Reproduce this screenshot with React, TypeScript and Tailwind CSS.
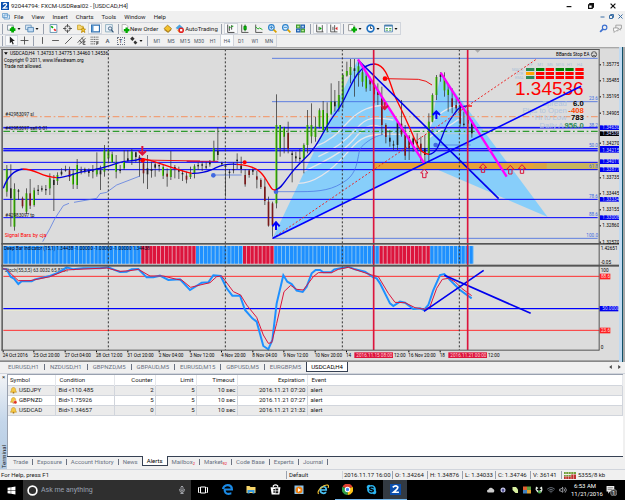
import type { ReactNode } from 'react';
import { FaWindows, FaSkype } from 'react-icons/fa';
import { FiMic, FiVolume2, FiWifi } from 'react-icons/fi';

// --- Types ---
type Candle = [high: number, low: number, top: number, bottom: number, kind: 'g' | 'r' | 'k'];

interface AlertRow {
  symbol: string;
  condition: string;
  counter: number;
  limit: number;
  timeout: string;
  expiration: string;
  event: string;
  stopped?: boolean;
}

const menus = ['File', 'View', 'Insert', 'Charts', 'Tools', 'Window', 'Help'];
const timeframes = ['M1', 'M5', 'M15', 'M30', 'H1', 'H4', 'D1', 'W1', 'MN'];
const chartTabs = ['EURUSD,H1', 'NZDUSD,H1', 'GBPNZD,M5', 'GBPAUD,M5', 'EURUSD,M15', 'GBPUSD,M5', 'EURGBP,M5', 'USDCAD,H4'];

const terminalTabs: { name: string; count?: number }[] = [
  { name: 'Trade' },
  { name: 'Exposure' },
  { name: 'Account History' },
  { name: 'News' },
  { name: 'Alerts' },
  { name: 'Mailbox', count: 2 },
  { name: 'Market', count: 92 },
  { name: 'Code Base' },
  { name: 'Experts' },
  { name: 'Journal' },
];

const alerts: AlertRow[] = [
  { symbol: 'USDJPY', condition: 'Bid <110.485', counter: 2, limit: 5, timeout: '10 sec', expiration: '2016.11.21 07:20', event: 'alert' },
  { symbol: 'GBPNZD', condition: 'Bid>1.75926', counter: 5, limit: 5, timeout: '10 sec', expiration: '2016.11.21 07:27', event: 'alert', stopped: true },
  { symbol: 'USDCAD', condition: 'Bid>1.34657', counter: 0, limit: 5, timeout: '10 sec', expiration: '2016.11.21 21:32', event: 'alert' },
];

// Chart units are thirds of a pixel, so one candle step is a bit under 12 units
const candles: Candle[] = [
  [360, 455, 372, 440, 'g'], [358, 545, 430, 460, 'k'], [415, 557, 432, 545, 'g'], [432, 465, 436, 440, 'k'],
  [455, 490, 460, 484, 'r'], [430, 507, 445, 500, 'g'], [402, 492, 445, 482, 'r'], [428, 485, 436, 480, 'g'],
  [420, 450, 434, 438, 'k'], [422, 440, 430, 434, 'k'], [420, 450, 432, 436, 'k'], [385, 450, 400, 430, 'g'],
  [390, 498, 405, 420, 'k'], [382, 420, 390, 408, 'g'], [370, 392, 380, 388, 'k'], [362, 380, 374, 377, 'k'],
  [365, 408, 376, 396, 'r'], [372, 432, 385, 418, 'g'], [342, 432, 360, 420, 'g'], [365, 388, 376, 380, 'k'],
  [368, 385, 372, 378, 'k'], [370, 395, 376, 384, 'k'], [360, 400, 376, 380, 'k'], [322, 395, 370, 388, 'g'],
  [362, 435, 376, 388, 'k'], [300, 395, 316, 380, 'g'], [312, 350, 316, 340, 'g'], [320, 345, 328, 352, 'g'],
  [330, 400, 352, 380, 'g'], [360, 385, 374, 378, 'k'], [315, 375, 350, 370, 'g'], [315, 350, 340, 348, 'k'],
  [312, 360, 320, 346, 'g'], [320, 352, 322, 336, 'k'], [330, 395, 335, 350, 'r'], [352, 415, 355, 385, 'r'],
  [330, 432, 370, 388, 'k'], [350, 398, 372, 378, 'k'], [350, 395, 358, 368, 'k'], [358, 380, 360, 364, 'k'],
  [360, 402, 366, 392, 'g'], [370, 425, 386, 395, 'r'], [318, 405, 372, 396, 'g'], [360, 400, 366, 372, 'k'],
  [365, 402, 375, 380, 'k'], [375, 408, 384, 388, 'k'], [380, 415, 392, 404, 'r'], [365, 402, 385, 396, 'g'],
  [358, 400, 364, 386, 'g'], [352, 375, 360, 364, 'k'], [348, 378, 358, 362, 'k'], [350, 372, 364, 368, 'k'],
  [345, 365, 352, 358, 'k'], [287, 350, 310, 348, 'g'], [247, 345, 318, 330, 'k'], [350, 362, 354, 358, 'k'],
  [358, 455, 362, 366, 'k'], [372, 400, 380, 384, 'k'], [352, 385, 372, 376, 'k'], [325, 372, 344, 348, 'k'],
  [335, 385, 362, 372, 'k'], [372, 425, 390, 418, 'r'], [372, 398, 376, 390, 'r'], [370, 390, 374, 380, 'k'],
  [378, 430, 394, 404, 'r'], [400, 432, 405, 426, 'r'], [400, 480, 425, 468, 'r'], [455, 545, 470, 542, 'r'],
  [470, 575, 475, 540, 'r'], [148, 490, 240, 475, 'g'], [240, 335, 240, 310, 'g'], [245, 325, 248, 275, 'g'],
  [230, 325, 264, 312, 'r'], [318, 412, 325, 330, 'k'], [320, 350, 334, 340, 'k'], [312, 350, 338, 342, 'k'],
  [295, 385, 300, 340, 'g'], [195, 325, 240, 300, 'g'], [175, 295, 240, 274, 'g'], [215, 290, 245, 276, 'g'],
  [190, 250, 196, 245, 'g'], [168, 260, 195, 255, 'g'], [172, 262, 205, 256, 'g'], [115, 210, 170, 206, 'g'],
  [135, 200, 170, 184, 'k'], [108, 200, 150, 190, 'g'], [85, 190, 90, 172, 'g'], [50, 95, 78, 92, 'g'],
  [42, 115, 66, 90, 'g'], [42, 155, 70, 78, 'k'], [45, 125, 64, 90, 'g'], [75, 125, 82, 110, 'g'],
  [80, 140, 94, 130, 'g'], [95, 138, 104, 118, 'r'], [115, 175, 122, 148, 'r'], [115, 180, 140, 150, 'r'],
  [125, 270, 160, 240, 'r'], [235, 295, 240, 276, 'r'], [255, 305, 278, 290, 'k'], [287, 315, 298, 302, 'k'],
  [230, 315, 232, 300, 'k'], [165, 275, 236, 268, 'r'], [240, 345, 270, 332, 'r'], [270, 345, 275, 310, 'r'],
  [275, 320, 280, 300, 'k'], [265, 320, 290, 296, 'k'], [275, 350, 296, 314, 'r'], [270, 355, 310, 330, 'k'],
  [205, 350, 230, 325, 'g'], [145, 232, 150, 230, 'g'], [90, 165, 96, 150, 'g'], [82, 110, 88, 96, 'k'],
  [82, 155, 100, 136, 'g'], [118, 200, 134, 150, 'g'], [130, 205, 160, 186, 'r'], [160, 200, 180, 190, 'r'],
  [175, 245, 180, 236, 'r'], [200, 245, 236, 240, 'k'], [195, 300, 225, 236, 'k'], [225, 278, 235, 265, 'k'],
];

const candleFill = { g: '#1d7a12', r: '#7a1a1a', k: '#222222' };

const levels = [248, 311, 317, 352, 374, 463, 518];

const priceLabels: [number, string][] = [
  [59, '1.35775'], [107, '1.35485'], [155, '1.35195'], [204, '1.34905'], [294, '1.34270'], [398, '1.33735'],
  [446, '1.33445'], [494, '1.33155'], [542, '1.32860'], [591, '1.32570'],
];

const priceTags: [number, string, string][] = [
  [248, '1.34630', '#0000ee'], [266, '1.34536', '#000000'], [316, '1.34215', '#0000ee'],
  [350, '1.34011', '#0000ee'], [374, '1.33877', '#0000ee'], [463, '1.33334', '#0000ee'], [518, '1.33008', '#0000ee'],
];

const fibLabels: [number, string][] = [
  [166, '23.6'], [245, '38.2'], [306, '50.0'], [370, '61.8'], [460, '78.6'], [514, '88.6'], [577, '100.0'],
];

// The cursor date tags cover part of the scale, only the free part of a label is drawn there
const timeLabels: [number, string][] = [
  [8, '24 Oct 2016'], [100, '25 Oct 20:00'], [194, '27 Oct 04:00'], [288, '28 Oct 12:00'], [382, '31 Oct 20:00'],
  [476, '2 Nov 04:00'], [569, '3 Nov 12:00'], [663, '4 Nov 20:00'], [757, '8 Nov 04:00'], [850, '9 Nov 12:00'],
  [944, '10 Nov 20:00'], [1038, '14'], [1225, '16 Nov 20:00'], [1319, '18'],
];

const signalCols = [378, 408, 437, 467, 496, 526];
const signalNames = ['TF', 'M1', 'M5', 'M15', 'H1', 'H4'];
const signalRows = [
  { name: 'MACD', y: 69, colors: ['#2e8b57', '#008000', '#ff0000', '#008000', '#008000', '#ff0000'] },
  { name: 'STR', y: 81, colors: ['#ffa500', '#ff0000', '#ff0000', '#ff0000', '#ff0000', '#ff0000'] },
  { name: 'EMA', y: 93, colors: ['#2e8b57', '#ff0000', '#ff0000', '#ff0000', '#ff0000', '#ff0000'] },
];

const stats = [
  { name: 'Spread', value: '6.0', color: '#000000', y: 183, x: 1700 },
  { name: 'Pips to Open', value: '-408', color: '#ff4500', y: 205, x: 1700 },
  { name: 'Hi to Low', value: '783', color: '#000000', y: 226, x: 1700 },
  { name: 'Daily A', value: '956.0', color: '#2e8b57', y: 248, x: 1690 },
];

// Trend bar: index ranges that are red
const isRedBar = (i: number) => (i >= 35 && i < 49) || (i >= 61 && i < 69) || (i >= 96 && i < 109);

function UpArrow({ x, y }: { x: number; y: number }) {
  return (
    <path
      d={`M${x} ${y} l11 12 h-6 v14 h-10 v-14 h-6 z`}
      fill="none"
      stroke="#dc143c"
      strokeWidth={3}
    />
  );
}

function PriceChart() {
  return (
    <svg viewBox="0 141 1857 945" className="block h-auto min-w-0 flex-1" fontFamily="Roboto, 'Liberation Sans', sans-serif" fontSize={14}>
      <rect x={0} y={141} width={1857} height={945} fill="#dcdcdc" />
      <rect x={0} y={141} width={1857} height={4} fill="#a8a8a8" />

      {/* Price pane */}
      <g transform="translate(0 135)">
        <g fill="#87cefa">
          <polygon points="818,580 1074,43 1273,355" />
          <polygon points="1273,357 1322,83 1643,516" />
        </g>
        <rect x={1121} y={353} width={672} height={21} fill="#d9a441" />
        <rect x={1121} y={356} width={480} height={14} fill="#f0a030" opacity={0.6} />
        <rect x={1640} y={353} width={153} height={21} fill="#c8b45c" />

        {/* White bands inside the first wave */}
        <g fill="none" stroke="#e8e6ea" strokeWidth={4}>
          <path d="M945 305 C1000 285 1020 255 1050 225 S1110 182 1160 180" />
          <path d="M955 335 C1000 315 1040 285 1070 250 S1120 215 1180 225" />
          <path d="M910 380 C960 355 1020 330 1060 285 S1110 225 1180 262" />
          <path d="M895 415 C950 415 1000 370 1040 325 S1090 262 1200 268" />
          <path d="M1285 250 C1310 205 1340 190 1375 180" />
          <path d="M1280 285 C1315 250 1340 255 1385 215" />
        </g>

        <path d="M816 40 H1793 M816 170 H1793 M816 580 H1793" stroke="#4169e1" strokeWidth={3} opacity={0.8} />
        <path d="M10 266 H1793" stroke="#c8c8c8" strokeWidth={2} />
        <path d="M10 215 H1793" stroke="#f0a078" strokeWidth={4} strokeDasharray="20 8 5 8" />
        <path d="M10 259 H1793" stroke="#2f9a2f" strokeWidth={4} strokeDasharray="20 8 5 8" />
        <rect x={10} y={245} width={1783} height={7} fill="#8a8ae0" />
        <rect x={10} y={309} width={1783} height={11} fill="#8a8ae0" />
        {levels.map((y) => (
          <path key={y} d={`M10 ${y} H1793`} stroke="#0000ff" strokeWidth={3} />
        ))}

        {/* Candles */}
        {candles.map(([high, low, top, bottom, kind], i) => {
          const x = Math.round(20 + i * 11.72);
          return (
            <g key={i}>
              <rect x={x - 1} y={high} width={3} height={low - high} fill="#333333" opacity={0.75} />
              <rect x={x - 2} y={top} width={5} height={bottom - top} fill={candleFill[kind]} />
              {kind === 'g' && <rect x={x - 3} y={top} width={3} height={bottom - top} fill="#7cfc00" opacity={0.6} />}
            </g>
          );
        })}

        {/* Stop lines */}
        <g fill="none" stroke="#4169e1" strokeWidth={2}>
          <path d="M128 590 L150 550 L165 520 L190 482 L207 475 M222 472 L290 460 L300 446 L320 442 L350 420 L420 393" />
          <path d="M640 390 H725 M828 440 H900 C960 440 1000 435 1040 405 S1070 320 1085 305 S1120 275 1150 268" />
          <path d="M1307 300 H1412" />
        </g>
        <g fill="#4169e1">
          <circle cx={640} cy={391} r={7} />
          <circle cx={828} cy={440} r={7} />
          <circle cx={1307} cy={300} r={7} />
        </g>
        <g fill="none" stroke="#ee1111" strokeWidth={3}>
          <path d="M428 345 L600 348" />
          <path d="M1155 101 L1255 103 Q1280 106 1296 120" />
        </g>
        <path d="M560 349 H655" stroke="#b00060" strokeWidth={3} />
        <g fill="#ff0000">
          <circle cx={428} cy={346} r={7} />
          <circle cx={734} cy={352} r={6} />
          <circle cx={1155} cy={101} r={7} />
        </g>

        {/* Moving average */}
        <g fill="none" strokeWidth={4}>
          <g stroke="#0000dd">
            <path d="M10 430 Q28 378 68 372" />
            <path d="M170 398 C200 398 220 385 250 380 S310 370 350 355 S390 355 425 340" />
            <path d="M575 385 C610 386 625 378 640 372 S665 355 710 358" />
            <path d="M828 434 C850 430 860 390 910 345 S970 250 1010 200 S1060 58 1125 57" />
            <path d="M1287 328 C1320 325 1320 270 1350 225 S1380 185 1402 183" />
          </g>
          <g stroke="#ff0000">
            <path d="M68 372 C110 372 120 396 170 398" />
            <path d="M425 340 C470 348 510 370 575 385" />
            <path d="M710 358 C780 362 790 390 805 415 S820 434 828 434" />
            <path d="M1125 57 C1165 62 1170 125 1190 165 S1230 250 1245 285 S1270 325 1287 328" />
            <path d="M1400 183 H1416" />
          </g>
        </g>

        <path d="M818 580 L1610 42" stroke="#ee2222" strokeWidth={3} strokeDasharray="6 6" />
        <path d="M1074 45 L1496 461" stroke="#0000ee" strokeWidth={5} />
        <path d="M1074 43 L1273 355 M1322 83 L1520 395" stroke="#ff00ff" strokeWidth={7} />

        {/* Trade arrows */}
        <g fill="none" strokeWidth={6}>
          <path d="M427 303 V328 M416 318 L427 329 L438 318" stroke="#dc143c" />
          <path d="M1154 172 V192 M1144 182 L1154 192 L1164 182" stroke="#dc143c" />
          <path d="M828 555 V534 M817 544 L828 532 L839 544" stroke="#0000ff" />
          <path d="M1309 222 V204 M1298 210 L1309 199 L1320 210" stroke="#0000ff" />
        </g>
        <UpArrow x={1273} y={372} />
        <UpArrow x={1449} y={356} />
        <UpArrow x={1531} y={361} />
        <UpArrow x={1566} y={359} />
        <path d="M1425 15 h16 l-8 8 z" fill="#aaaaaa" />

        {/* Corner texts */}
        <path d="M12 22 h11 l-5 7 z" fill="#000000" />
        <text x={30} y={30} fill="#000000">USDCAD,H4&nbsp; 1.34733 1.34775 1.34460 1.34536</text>
        <text x={12} y={50} fill="#000000">Copyright © 2011, www.lifexdream.org</text>
        <text x={12} y={68} fill="#000000">Trade not allowed.</text>
        <text x={16} y={213} fill="#111111">#42983097 sl</text>
        <text x={16} y={255} fill="#111111">#42983097 sell 0.01</text>
        <text x={16} y={515} fill="#111111">#42983097 tp</text>
        <text x={14} y={577} fill="#ff0000" fontSize={16}>Signal Bars by cja</text>
        <text x={1668} y={32} fill="#000000">BBands Stop EA</text>
        <g fill="none" stroke="#222222" strokeWidth={2}>
          <circle cx={1782} cy={28} r={8} />
          <path d="M1778 25 v2 M1786 25 v2 M1777 33 q5 -5 10 0" />
        </g>

        {/* Signal panel */}
        {signalCols.map((x, c) => (
          <text key={x} x={x + 1213} y={63} fontSize={12} fill="#a9bfd8" textAnchor="middle">{signalNames[c]}</text>
        ))}
        {signalRows.map((row) => (
          <g key={row.name}>
            <text x={1570} y={row.y + 9} fontSize={12} fill="#a9bfd8" textAnchor="end">{row.name}</text>
            {row.colors.map((color, c) => (
              <rect key={c} x={signalCols[c] + 1200} y={row.y} width={25} height={9} fill={color} />
            ))}
          </g>
        ))}
        <g fontFamily="'Liberation Sans', Arial, sans-serif">
          <text x={1751} y={151} fontSize={57} fill="#ff0000" textAnchor="end">1.34536</text>
          {stats.map((s) => (
            <g key={s.name} fontSize={23}>
              <text x={s.x} y={s.y} fill="#b0c4de" textAnchor="end">{s.name}</text>
              <text x={1751} y={s.y} fill={s.color} fontWeight={700} textAnchor="end">{s.value}</text>
            </g>
          ))}
        </g>
        <path d="M818 580 L1743 124" stroke="#0000ff" strokeWidth={5} />

        {fibLabels.map(([y, label]) => (
          <text key={label} x={1794} y={y} fill="#4169e1" textAnchor="end">{label}</text>
        ))}
      </g>

      {/* Indicator panes */}
      <g transform="translate(0 720)">
        <rect x={10} y={18} width={5} height={53} fill="#1e90ff" />
        {candles.map((_, i) => {
          const x = 14 + Math.round(i * 11.72);
          return (
            <g key={i}>
              <rect x={x} y={18} width={12} height={53} fill={isRedBar(i) ? '#e88aa0' : '#7cc0f4'} />
              <rect x={x} y={18} width={9} height={53} fill={isRedBar(i) ? '#dc143c' : '#1e90ff'} />
            </g>
          );
        })}
        <text x={12} y={31} fill="#000022">Deep Bar Indicator (15,1) 1.34438 -1.00000 -1.00000 -1.00000 1.34438</text>
        <text x={14} y={97} fill="#222222">Stoch(55,3,5) 63.0032 65.8281</text>

        <path d="M10 109 H1798 M10 271 H1798" stroke="#ff3030" strokeWidth={3} />
        <path d="M10 210 H1798" stroke="#f4f4c8" strokeWidth={3} />
        <path d="M10 206 H1798" stroke="#0000ff" strokeWidth={4} />
        <polyline
          fill="none"
          stroke="#1e90ff"
          strokeWidth={6}
          points="8,86 20,88 32,110 42,116 55,132 65,124 95,124 105,118 150,108 175,98 200,82 220,88 250,85 300,85 325,82 340,88 360,96 380,95 395,88 415,87 440,112 460,112 480,107 505,120 540,118 570,150 605,128 625,127 640,106 662,108 680,145 697,167 720,167 735,210 757,235 770,245 790,318 805,328 817,300 830,190 850,106 862,125 875,132 890,152 908,156 920,140 935,100 947,90 960,90 970,97 993,97 1003,88 1045,80 1065,88 1095,95 1120,112 1130,115 1140,130 1170,190 1180,198 1200,185 1215,188 1240,207 1260,205 1272,210 1285,195 1300,150 1320,105 1333,102 1345,115 1380,150 1415,175"
        />
        <polyline
          fill="none"
          stroke="#dc143c"
          strokeWidth={3}
          points="8,86 20,88 40,108 55,122 90,122 150,110 200,90 230,88 320,84 360,94 390,92 415,88 450,108 490,108 530,118 545,120 572,142 600,135 630,128 650,110 665,108 700,155 722,165 740,195 770,232 790,285 805,310 815,308 830,250 852,155 872,136 890,148 910,150 940,110 955,98 995,98 1015,88 1045,82 1115,105 1135,110 1165,160 1185,187 1215,188 1245,203 1275,208 1290,200 1310,145 1327,118 1345,115 1365,125 1385,145 1415,167"
        />
        <path d="M1272 214 L1451 91 M1333 106 L1592 220" stroke="#0000ee" strokeWidth={5} />
      </g>

      {/* Day separators and cursor lines run through every pane */}
      <path d="M325 148 V1050 M676 148 V1050 M1027 148 V1050 M1378 148 V1050" stroke="#333333" strokeWidth={3} strokeDasharray="6 6" />
      <path d="M1121 148 V1050 M1403 148 V1050" stroke="#dc143c" strokeWidth={5} />

      {/* Frame */}
      <g fill="#555555">
        <rect x={4} y={147} width={5} height={904} fill="#666666" />
        <rect x={4} y={147} width={1794} height={3} />
        <rect x={4} y={729} width={1853} height={5} />
        <rect x={4} y={794} width={1853} height={6} />
        <rect x={4} y={1049} width={1794} height={3} />
        <rect x={1796} y={147} width={3} height={904} />
      </g>
      <rect x={0} y={1081} width={1857} height={5} fill="#888888" />

      {/* Price scale */}
      <g transform="translate(0 135)">
        {priceLabels.map(([y, label]) => (
          <g key={label} fill="#000000">
            <rect x={1799} y={y - 1} width={4} height={3} />
            <text x={1807} y={y + 5}>{label}</text>
          </g>
        ))}
        <rect x={1800} y={303} width={57} height={14} fill="#0000ee" />
        {priceTags.map(([y, label, fill]) => (
          <g key={label}>
            <rect x={1800} y={y - 7} width={57} height={14} fill={fill} />
            <text x={1807} y={y + 5} fill="#c8d4ff">{label}</text>
          </g>
        ))}
      </g>
      <g transform="translate(0 720)" fill="#000000">
        <text x={1802} y={29}>1.42651</text>
        <text x={1802} y={72}>-0.05</text>
        <text x={1802} y={95}>100</text>
        <text x={1802} y={326}>0</text>
        <rect x={1799} y={101} width={32} height={17} fill="#ff2020" />
        <text x={1803} y={114} fill="#ffdddd">88.6</text>
        <rect x={1799} y={198} width={56} height={16} fill="#0000ee" />
        <text x={1807} y={211} fill="#c8d4ff">50.0000</text>
        <rect x={1799} y={263} width={32} height={17} fill="#ff2020" />
        <text x={1803} y={276} fill="#ffdddd">23.6</text>

        {/* Time scale */}
        {timeLabels.map(([x, label]) => (
          <g key={label}>
            <rect x={x} y={332} width={3} height={5} />
            <text x={x} y={350}>{label}</text>
          </g>
        ))}
        <rect x={1063} y={337} width={116} height={17} fill="#dc143c" />
        <text x={1069} y={350} fill="#ffd0d8">2016.11.15 08:00</text>
        <text x={1182} y={350}>12:00</text>
        <rect x={1345} y={337} width={116} height={17} fill="#dc143c" />
        <text x={1351} y={350} fill="#ffd0d8">2016.11.21 00:00</text>
        <text x={1464} y={350}>12:00</text>
      </g>
    </svg>
  );
}

// --- Toolbar pieces ---
function Grip() {
  return <span className="mx-[2px] h-[10px] w-px shrink-0 bg-gray-400" />;
}

interface ToolProps {
  label: string;
  drop?: boolean;
  active?: boolean;
  narrow?: boolean;
  children: ReactNode;
}

function Tool({ label, drop, active, narrow, children }: ToolProps) {
  const width = drop ? 'w-[18px]' : narrow ? 'w-[13px]' : 'w-[14px]';
  return (
    <button
      aria-label={label}
      className={`flex h-[11px] shrink-0 items-center justify-center gap-px ${width} ${active ? 'bg-gray-50 outline -outline-offset-1 outline-gray-300' : ''}`}
    >
      <svg viewBox="0 0 16 16" className="size-[9px]" fill="none" stroke="#444" strokeWidth={1.5}>
        {children}
      </svg>
      {drop && (
        <svg viewBox="0 0 6 4" className="h-[2px] w-[4px]"><path d="M0 0h6L3 4z" fill="#111" /></svg>
      )}
    </button>
  );
}

function MainToolbar() {
  return (
    <div className="flex h-[13px] items-center justify-between">
      <div className="flex h-[13px] items-center border border-l-0 border-gray-300">
        <Grip />
        <Tool label="New Chart" drop>
          <path d="M1 2h10v9H1z" fill="#fff" stroke="#789" />
          <path d="M10 5v10M5 10h10" stroke="#0a0" strokeWidth={5} />
        </Tool>
        <Tool label="Profiles" drop>
          <path d="M1 2h10v8H1z" fill="#dbeaf8" stroke="#6c94b8" />
          <path d="M5 6h10v8H5z" fill="#c2dcf4" stroke="#4a80b0" />
        </Tool>
        <Grip />
        <Tool label="Market Watch">
          <path d="M2 1h12v14H2z" fill="#fff" stroke="#58a" />
          <path d="M4 4l3 3" stroke="#0a0" strokeWidth={3} />
          <path d="M9 9l3 3" stroke="#e22" strokeWidth={3} />
        </Tool>
        <Tool label="Data Window">
          <circle cx="8" cy="8" r="5" />
          <path d="M8 0v6M8 10v6M0 8h6M10 8h6" />
        </Tool>
        <Tool label="Navigator">
          <path d="M1 2h5l1 2h4v6H1z" fill="#f7d774" stroke="#c9a227" />
          <path d="M11 6l1 3h3l-2 2 1 4-3-2-3 2 1-4-2-2h3z" fill="#ffd23c" stroke="#b88600" />
        </Tool>
        <Tool label="Terminal" active>
          <path d="M1 2h14v12H1z" fill="#fff" stroke="#2f6fb0" strokeWidth={2} />
          <path d="M3 3v10" stroke="#5b9bd5" strokeWidth={3} />
        </Tool>
        <Tool label="Strategy Tester">
          <path d="M1 1h12v13H1z" fill="#eaf2fa" stroke="#8ab" />
          <circle cx="9" cy="8" r="3" stroke="#357" />
          <path d="M11 10l4 5" stroke="#357" strokeWidth={2} />
        </Tool>
        <Grip />
        <button className="flex h-[11px] items-center pr-[2px]">
          <svg viewBox="0 0 16 16" className="size-[9px]" fill="none">
            <path d="M2 1h7l3 3v10H2z" fill="#fff" stroke="#888" />
            <path d="M10 6v10M5 11h10" stroke="#0a0" strokeWidth={4} />
          </svg>
          New Order
        </button>
        <Tool label="MetaEditor">
          <path d="M2 8l6-6 7 6-6 6z" fill="#f3c12e" stroke="#a87a10" />
          <path d="M2 10l7 5 6-5" stroke="#a87a10" />
        </Tool>
        <button className="flex h-[11px] items-center gap-px px-px">
          <svg viewBox="0 0 16 16" className="size-[9px]" fill="none">
            <path d="M1 7l7-6 7 6-7 4z" fill="#4aa3e0" />
            <path d="M2 9l5 6 3-1z" fill="#f0b429" />
            <circle cx="11" cy="11" r="5" fill="#e02020" />
            <path d="M9 9h4v4H9z" fill="#fff" />
          </svg>
          AutoTrading
        </button>
        <Grip />
        <Tool label="Bar Chart" active>
          <path d="M3 1v14h12M6 4v8M10 2v8" stroke="#333" />
          <path d="M6 6h2M10 4h3" stroke="#0a0" strokeWidth={2} />
        </Tool>
        <Tool label="Candlesticks">
          <path d="M3 1v14h12" />
          <path d="M9 1v12" stroke="#060" />
          <path d="M7 4h4v6H7z" fill="#0c0" stroke="#070" />
        </Tool>
        <Tool label="Line Chart">
          <path d="M3 1v14h12" />
          <path d="M3 5l4 4 3-2 5 3" stroke="#0a0" />
        </Tool>
        <Tool label="Zoom In">
          <circle cx="6" cy="6" r="5" fill="#d9efff" stroke="#2a7fc9" strokeWidth={2} />
          <path d="M6 3v6M3 6h6" stroke="#2a7fc9" />
          <path d="M10 10l5 5" stroke="#d8a000" strokeWidth={3} />
        </Tool>
        <Tool label="Zoom Out">
          <circle cx="6" cy="6" r="5" fill="#d9efff" stroke="#2a7fc9" strokeWidth={2} />
          <path d="M3 6h6" stroke="#2a7fc9" />
          <path d="M10 10l5 5" stroke="#d8a000" strokeWidth={3} />
        </Tool>
        <Tool label="Tile Windows">
          <path d="M1 2h6v5H1zM9 9h6v5H9z" fill="#bfe8a0" stroke="#3a9a2a" strokeWidth={2} />
          <path d="M9 2h6v5H9zM1 9h6v5H1z" fill="#b8d8f8" stroke="#1d5fb0" strokeWidth={2} />
        </Tool>
        <Grip />
        <Tool label="Auto Scroll" active>
          <path d="M3 1v13h12M7 5v6M13 2v12" />
          <path d="M8 5l4 3-4 3z" fill="#0a0" stroke="none" />
        </Tool>
        <Tool label="Chart Shift" active>
          <path d="M3 1v13h12M7 5v6M10 2v12" />
          <path d="M15 5l-4 3 4 3z" fill="#d22" stroke="none" />
        </Tool>
        <Grip />
        <Tool label="Indicators" drop>
          <path d="M1 1h8l2 2v9H1z" fill="#fff" stroke="#888" />
          <path d="M11 5v10M6 10h10" stroke="#0a0" strokeWidth={4} />
        </Tool>
        <Tool label="Periods" drop>
          <circle cx="8" cy="8" r="6" fill="#fff" stroke="#1e6fc0" strokeWidth={3} />
          <path d="M8 4v4h3" stroke="#333" />
        </Tool>
        <Tool label="Templates" drop>
          <path d="M1 2h14v12H1z" fill="#fff" stroke="#4a80b0" />
          <path d="M1 3h14" stroke="#4a80b0" strokeWidth={3} />
          <path d="M3 8h4M9 8h4M3 11h4M9 11h4" stroke="#393" />
        </Tool>
      </div>
      <div className="flex items-center pr-px">
        <Tool label="Search">
          <circle cx="10" cy="6" r="4" stroke="#3b6fd0" strokeWidth={2} />
          <path d="M7 9l-5 5" stroke="#3b6fd0" strokeWidth={3} />
        </Tool>
        <Tool label="Chat">
          <path d="M5 2h10v6h-2v3l-3-3H5z" fill="#eee" stroke="#999" />
          <path d="M1 7h8v5H5l-3 3v-3H1z" fill="#fff" stroke="#999" />
        </Tool>
      </div>
    </div>
  );
}

function LineToolbar() {
  return (
    <div className="flex h-[12px]">
      <div className="flex h-[12px] items-center border border-l-0 border-t-0 border-gray-300">
        <Grip />
        <Tool label="Cursor" narrow active>
          <path d="M5 1v12l3-3 2 5 2-1-2-5h4z" fill="#222" stroke="none" />
        </Tool>
        <Tool label="Crosshair" narrow><path d="M8 1v14M1 8h14" /></Tool>
        <Grip />
        <Tool label="Vertical Line" narrow><path d="M8 2v12" /></Tool>
        <Tool label="Horizontal Line" narrow><path d="M2 8h12" /></Tool>
        <Tool label="Trendline" narrow><path d="M2 14L14 2" /></Tool>
        <Tool label="Channel" narrow>
          <path d="M1 12L12 1M4 15L15 4M4 7l5 6M8 3l5 6" />
          <path d="M15 10h-4v5h4M11 12h3" />
        </Tool>
        <Tool label="Fibonacci" narrow>
          <path d="M1 2h14M1 6h14M1 10h14M1 14h8" strokeDasharray="2 1" />
          <path d="M15 11h-3v5M12 13h3" />
        </Tool>
        <button className="w-[13px] text-center font-medium text-gray-600">A</button>
        <button className="flex w-[13px] justify-center text-gray-600">
          <span className="w-[8px] border border-dotted border-gray-500 text-center text-[5px] leading-[6px] font-bold">T</span>
        </button>
        <Tool label="Arrows" drop>
          <path d="M2 5l4-4 4 4-4 4zM8 11l3-3 4 4-4 3z" fill="#333" stroke="none" />
        </Tool>
        <Grip />
        {timeframes.map((tf) => (
          <button
            key={tf}
            className={`h-[11px] w-[14px] text-center text-[5px] text-gray-600 ${tf === 'H4' ? 'border-x border-gray-300 bg-gray-50' : ''}`}
          >
            {tf}
          </button>
        ))}
      </div>
    </div>
  );
}

function WindowButtons({ small }: { small?: boolean }) {
  const size = small ? 'size-[5px]' : 'size-[6px]';
  const stroke = small ? '#3b6ea5' : '#111';
  return (
    <div className={`flex items-center ${small ? 'gap-1 pr-[2px]' : 'gap-4 pr-[9px]'}`}>
      <button aria-label="Minimize"><svg viewBox="0 0 10 10" className={size} stroke={stroke} strokeWidth={2}><path d="M1 6h8" /></svg></button>
      <button aria-label="Restore"><svg viewBox="0 0 10 10" className={size} fill="none" stroke={stroke} strokeWidth={2}><path d="M1 3h6v6H1zM3 3V1h6v6H7" /></svg></button>
      <button aria-label="Close"><svg viewBox="0 0 10 10" className={size} stroke={stroke} strokeWidth={2}><path d="M1 1l8 8M9 1l-8 8" /></svg></button>
    </div>
  );
}

function AppLogo({ className }: { className: string }) {
  return (
    <svg viewBox="0 0 16 16" className={className}>
      <rect width="16" height="16" fill="#0b4fae" />
      <path d="M4 5q4-4 7-1c2 3-3 5-6 8h8" fill="none" stroke="#fff" strokeWidth="2.5" />
    </svg>
  );
}

function AlertBell({ stopped }: { stopped?: boolean }) {
  return (
    <svg viewBox="0 0 16 16" className="size-[7px]">
      <path d="M8 1c4 0 5 4 5 7l2 4H1l2-4c0-3 1-7 5-7z" fill="#f6c945" stroke="#b07c10" />
      <circle cx="8" cy="13" r="2" fill="#b07c10" />
      {stopped && <circle cx="12" cy="12" r="4" fill="#e03020" stroke="#fff" />}
    </svg>
  );
}

function Terminal() {
  return (
    <section className="flex flex-1 border-t border-gray-300">
      <div className="flex w-[7px] flex-col items-center justify-between bg-gradient-to-b from-gray-100 via-[#c4d6ea] to-[#b4cbe2]">
        <button aria-label="Close terminal" className="leading-[6px]">×</button>
        <span className="rotate-180 pt-px leading-[7px] [writing-mode:vertical-rl]">Terminal</span>
      </div>
      <div className="flex min-w-0 flex-1 flex-col pr-[2px]">
        <div className="flex-1 border-t border-l border-gray-400 bg-white">
          <table className="w-full table-fixed border-collapse text-left">
            <colgroup>
              <col className="w-[47px]" />
              <col className="w-[59px]" />
              <col className="w-[41px]" />
              <col className="w-[41px]" />
              <col className="w-[41px]" />
              <col className="w-[70px]" />
              <col />
            </colgroup>
            <thead>
              <tr className="h-[10px] border-b border-gray-300 *:border-r *:border-gray-200 *:font-normal">
                <th className="pl-[2px]">Symbol</th>
                <th className="pl-1">Condition</th>
                <th className="pr-[2px] text-right">Counter</th>
                <th className="pr-[2px] text-right">Limit</th>
                <th className="pr-[2px] text-right">Timeout</th>
                <th className="pr-[2px] text-right">Expiration</th>
                <th className="pl-1">Event</th>
              </tr>
            </thead>
            <tbody>
              {alerts.map((a) => (
                <tr key={a.symbol} className="h-[10px] border-b border-gray-300 odd:bg-[#ebebeb] *:border-r *:border-gray-300">
                  <td className="pl-[2px]">
                    <span className="flex items-center gap-[2px]"><AlertBell stopped={a.stopped} />{a.symbol}</span>
                  </td>
                  <td className="pl-[3px]">{a.condition}</td>
                  <td className="pr-px text-right">{a.counter}</td>
                  <td className="pr-px text-right">{a.limit}</td>
                  <td className="pr-px text-right">{a.timeout}</td>
                  <td className="pr-px text-right">{a.expiration}</td>
                  <td className="pl-[3px]">{a.event}</td>
                </tr>
              ))}
            </tbody>
          </table>
        </div>
        <nav className="mb-[2px] flex h-[11px] items-start border-t border-gray-700 pl-[2px] text-gray-500">
          {terminalTabs.map((t) =>
            t.name === 'Alerts' ? (
              <button key={t.name} className="-mt-px h-[10px] border-x border-b border-gray-700 bg-white px-1 text-black">{t.name}</button>
            ) : (
              <button key={t.name} className="flex h-[9px] items-center">
                <span className="px-1">
                  {t.name}
                  {t.count && <sub className="text-[4px] text-red-600">{t.count}</sub>}
                </span>
                {t.name !== 'News' && <span className="h-[6px] w-px bg-gray-500" />}
              </button>
            ),
          )}
        </nav>
      </div>
    </section>
  );
}

function StatusBar() {
  return (
    <footer className="flex h-[11px] items-center border-t border-gray-300 pl-px *:h-[8px]">
      <span className="flex-1">For Help, press F1</span>
      <span className="w-[56px] border-l border-gray-400 pl-[2px]">Default</span>
      <span className="w-[50px] border-l border-gray-300 pl-px">2016.11.17 16:00</span>
      <span className="w-[35px] border-l border-gray-400 pl-[2px]">O: 1.34264</span>
      <span className="w-[35px] border-l border-gray-400 pl-[2px]">H: 1.34876</span>
      <span className="w-[33px] border-l border-gray-400 pl-[2px]">L: 1.34033</span>
      <span className="w-[35px] border-l border-gray-400 pl-[2px]">C: 1.34746</span>
      <span className="w-[31px] border-l border-gray-400 pl-[2px]">V: 36141</span>
      <span className="flex w-[64px] items-center gap-[2px] border-l border-gray-400 pl-[2px]">
        <svg viewBox="0 0 24 14" className="h-[7px] w-[12px]">
          <path d="M0 0h24v4H0zM0 6h14v3H0z" fill="#6fa03a" />
          <path d="M0 9h24v5H0zM14 5h10v4H14z" fill="#c03030" />
          <path d="M4 0v14M9 0v14M14 0v14M19 0v14" stroke="#f0e8d0" strokeWidth={1} />
        </svg>
        5355/8 kb
      </span>
    </footer>
  );
}

function TaskButton({ label, open, active, children }: { label: string; open?: boolean; active?: boolean; children: ReactNode }) {
  return (
    <button
      aria-label={label}
      className={`flex h-[20px] w-[24px] items-center justify-center border-b ${open ? 'border-[#76b9ed]' : 'border-transparent'} ${active ? 'bg-[#333a42]' : ''}`}
    >
      {children}
    </button>
  );
}

function Taskbar() {
  return (
    <div className="flex h-[20px] items-center bg-black text-white">
      <button aria-label="Start" className="flex w-[23px] justify-center"><FaWindows className="size-[9px]" /></button>
      <label className="flex h-[20px] w-[168px] items-center gap-[3px] bg-[#2f2f2f] pl-1">
        <svg viewBox="0 0 20 20" className="size-[11px]" aria-label="Cortana"><circle cx="10" cy="10" r="8" fill="none" stroke="#fff" strokeWidth="3" /></svg>
        <input className="w-[134px] bg-transparent text-[7px] outline-none placeholder:text-gray-400" placeholder="Ask me anything" />
        <FiMic className="size-[8px] text-gray-300" />
      </label>
      <TaskButton label="Task View">
        <svg viewBox="0 0 20 16" className="h-[8px] w-[10px]" fill="none" stroke="#fff" strokeWidth={2}><path d="M5 2h10v12H5zM3 3H1v10h2M17 3h2v10h-2" /></svg>
      </TaskButton>
      <TaskButton label="Edge">
        <svg viewBox="0 0 20 20" className="size-[11px]" fill="none" stroke="#1a8ae6" strokeWidth={4}>
          <path d="M4 10h14c0-5-3-8-8-8-5 0-8 4-8 7M5 9c-1 6 2 9 7 9 2 0 4-1 5-1" />
        </svg>
      </TaskButton>
      <TaskButton label="File Explorer">
        <svg viewBox="0 0 20 18" className="h-[9px] w-[10px]">
          <path d="M1 2h6l2 2h10v12H1z" fill="#f6d56a" />
          <path d="M3 10h14v7h-4v-3H7v3H3z" fill="#3a9ce0" />
        </svg>
      </TaskButton>
      <TaskButton label="Store">
        <svg viewBox="0 0 20 20" className="size-[11px]">
          <path d="M6 6V3q4-3 8 0v3" fill="none" stroke="#fff" strokeWidth={2} />
          <path d="M1 6h18l-2 13H3z" fill="#fff" />
          <path d="M6 9h3v3H6zM10 8h5v4h-5zM6 13h3v3H6zM10 13h5v4h-5z" fill="#111" />
        </svg>
      </TaskButton>
      <TaskButton label="Media Player">
        <svg viewBox="0 0 20 20" className="size-[10px]">
          <rect x="1" y="1" width="18" height="17" fill="#8cc4ec" />
          <circle cx="10" cy="10" r="7" fill="#f08010" />
          <path d="M8 6l6 4-6 4z" fill="#fff" />
        </svg>
      </TaskButton>
      <TaskButton label="Internet Explorer">
        <svg viewBox="0 0 22 20" className="h-[11px] w-[12px]" fill="none">
          <path d="M6 11h11c0-4-2-6-5-6s-6 2-6 6 3 6 6 6c2 0 4-1 4-3" stroke="#4cc3f5" strokeWidth={3} />
          <path d="M3 18C-2 13 12 0 20 2c2 1 1 4 0 5" stroke="#f5c432" strokeWidth={2} />
        </svg>
      </TaskButton>
      <TaskButton label="Chrome" open>
        <svg viewBox="0 0 20 20" className="size-[11px]">
          <path d="M10 10L1 5A10 10 0 0 1 19 5z" fill="#e04030" />
          <path d="M10 10L19 5A10 10 0 0 1 10 20z" fill="#fbc116" />
          <path d="M10 10L10 20A10 10 0 0 1 1 5z" fill="#2e9e48" />
          <circle cx="10" cy="10" r="4" fill="#4285f4" stroke="#fff" strokeWidth={2} />
        </svg>
      </TaskButton>
      <TaskButton label="Skype" open><FaSkype className="size-[11px] text-[#2bb4f0]" /></TaskButton>
      <TaskButton label="Trading Platform" open active><AppLogo className="size-[11px]" /></TaskButton>

      <div className="ml-auto flex items-center gap-[4px] pr-[2px]">
        <svg viewBox="0 0 16 12" className="h-[6px] w-[8px]"><path d="M3 11a3 3 0 0 1 0-6 5 5 0 0 1 9-1 4 4 0 0 1 1 7z" fill="#ccc" /></svg>
        <svg viewBox="0 0 16 16" className="size-[8px]"><circle cx="8" cy="8" r="5" fill="#c9c9e8" /><path d="M5 8l3-3 3 3-3 5z" fill="#4a4a90" /></svg>
        <svg viewBox="0 0 16 16" className="size-[8px]"><path d="M3 2h7l4 5v7H9L3 8z" fill="#d9f0a0" /></svg>
        <svg viewBox="0 0 16 16" className="size-[8px]">
          <path d="M0 1h8v7H0z" fill="#e06030" /><path d="M8 1h8v7H8z" fill="#60a040" /><path d="M0 8h8v7H0z" fill="#4080c0" /><path d="M8 8h8v7H8z" fill="#e0a030" />
        </svg>
        <svg viewBox="0 0 16 16" className="size-[8px]"><path d="M2 1l5 3-4 3 5 3-3 3-4-6zM14 1L9 4l4 3-5 3 4 4 3-6z" fill="#e8f0e8" /><circle cx="9" cy="12" r="3" fill="#50b050" /></svg>
        <FiWifi className="size-[8px] text-gray-400" />
        <FiVolume2 className="size-[8px] text-gray-300" />
        <div className="w-[28px] text-center text-[6px] leading-[8px] whitespace-nowrap">
          <div>6:53 AM</div>
          <div>11/21/2016</div>
        </div>
        <button aria-label="Notifications" className="relative ml-[3px] mr-[6px]">
          <svg viewBox="0 0 20 20" className="size-[11px]">
            <path d="M1 2h14v10H7l-3 4v-4H1z" fill="#eee" />
            <path d="M3 5h10M3 8h8" stroke="#333" />
            <circle cx="14" cy="14" r="6" fill="#444" stroke="#aaa" />
          </svg>
          <span className="absolute right-[2px] bottom-0 text-[5px] leading-[6px]">1</span>
        </button>
      </div>
    </div>
  );
}

export default function App() {
  return (
    <div className="flex min-h-screen flex-col bg-[#f0f0f0] font-[Roboto,'Liberation_Sans',sans-serif] text-[6px] leading-[8px] text-[#1a1a1a]">
      {/* Title bar */}
      <header className="flex h-[11px] items-center justify-between bg-white pl-px">
        <div className="flex items-center gap-[2px]">
          <AppLogo className="size-[8px]" />
          <span>92044794: FXCM-USDReal02 - [USDCAD,H4]</span>
        </div>
        <WindowButtons />
      </header>

      {/* Menu */}
      <nav className="flex h-[11px] items-center justify-between pl-[2px]">
        <div className="flex items-center gap-[8px]">
          <svg viewBox="0 0 16 14" className="-mr-[4px] h-[7px] w-[8px]" fill="#dcecfa" stroke="#5a96c8" strokeWidth={1.5}><path d="M1 1h10v8H1zM4 4h11v8H4z" /></svg>
          {menus.map((m) => (
            <button key={m}>{m}</button>
          ))}
        </div>
        <WindowButtons small />
      </nav>

      <MainToolbar />
      <LineToolbar />

      {/* Chart window */}
      <main className="flex">
        <PriceChart />
        <div className="w-[3px] bg-[#c0daf2]" />
        <div className="w-px bg-[#0f5068]" />
        <div className="w-[2px] bg-[#a8a8a8]" />
      </main>

      {/* Chart tabs */}
      <nav className="flex h-[11px] items-start justify-between pl-[3px] text-gray-500">
        <div className="flex items-center">
          {chartTabs.map((tab) =>
            tab === 'USDCAD,H4' ? (
              <button key={tab} className="h-[10px] border-x border-b border-gray-700 bg-white px-[4px] text-black">{tab}</button>
            ) : (
              <button key={tab} className="flex h-[10px] items-center">
                <span className="px-[5px]">{tab}</span>
                {tab !== 'EURGBP,M5' && <span className="h-[6px] w-px bg-gray-500" />}
              </button>
            ),
          )}
        </div>
        <div className="flex gap-[6px] pt-[3px] pr-[4px]">
          <button aria-label="Scroll left"><svg viewBox="0 0 4 6" className="h-[4px] w-[3px]"><path d="M4 0v6L0 3z" fill="#444" /></svg></button>
          <button aria-label="Scroll right"><svg viewBox="0 0 4 6" className="h-[4px] w-[3px]"><path d="M0 0v6l4-3z" fill="#444" /></svg></button>
        </div>
      </nav>

      <Terminal />
      <StatusBar />
      <Taskbar />
    </div>
  );
}
